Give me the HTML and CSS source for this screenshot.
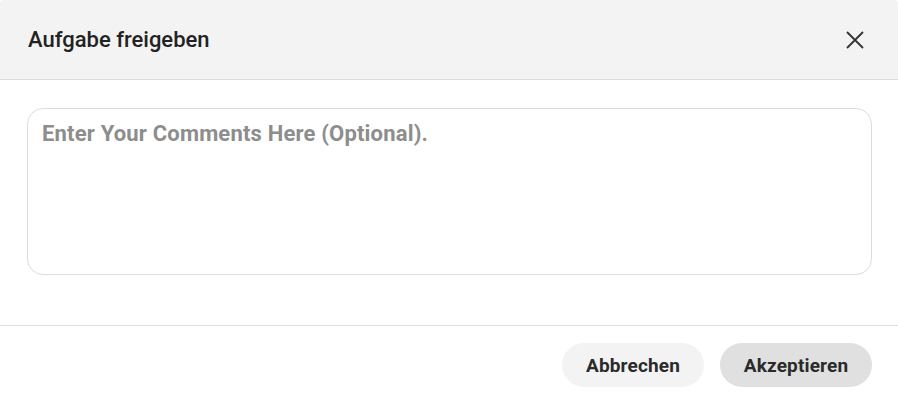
FILE: index.html
```html
<!DOCTYPE html>
<html lang="de">
<head>
<meta charset="utf-8">
<link rel="stylesheet" href="styles.css">
</head>
<body>
<div class="dialog">
  <header class="dialog-header">
    <h2 class="dialog-title">Aufgabe freigeben</h2>
    <button class="close-btn" aria-label="Schließen">
      <svg width="18" height="18" viewBox="0 0 18 18"><path d="M1 1L17 17M17 1L1 17" stroke="#333" stroke-width="1.8" fill="none"/></svg>
    </button>
  </header>
  <div class="dialog-body">
    <textarea class="comment" placeholder="Enter Your Comments Here (Optional)."></textarea>
  </div>
  <footer class="dialog-footer">
    <button class="btn btn-cancel">Abbrechen</button>
    <button class="btn btn-accept">Akzeptieren</button>
  </footer>
</div>
</body>
</html>
```
FILE: styles.css
```css
html, body {
  margin: 0;
  padding: 0;
  background: #ffffff;
  font-family: Roboto, "Liberation Sans", sans-serif;
}
.dialog {
  width: 898px;
  height: 400px;
  display: flex;
  flex-direction: column;
  background: #fff;
  border-radius: 4px 4px 0 0;
  overflow: hidden;
}
.dialog-header {
  height: 79px;
  flex: none;
  background: #f3f3f3;
  border-bottom: 1px solid #dcdcdc;
  display: flex;
  align-items: center;
  justify-content: space-between;
  padding: 0 34px 0 28px;
}
.dialog-title {
  margin: 0;
  font-size: 22px;
  font-weight: 500;
  color: #222;
  letter-spacing: 0;
}
.close-btn {
  background: none;
  border: none;
  padding: 0;
  width: 18px;
  height: 18px;
  display: flex;
  cursor: pointer;
}
.dialog-body {
  padding: 28px 26px 50px 27px;
  border-bottom: 1px solid #dcdcdc;
}
.comment {
  display: block;
  box-sizing: border-box;
  width: 100%;
  height: 167px;
  border: 1px solid #dcdcdc;
  border-radius: 16px;
  padding: 12px 14px;
  resize: none;
  outline: none;
  font-family: Roboto, "Liberation Sans", sans-serif;
  font-size: 22px;
  font-weight: 700;
  letter-spacing: 0.18px;
  color: #333;
}
.comment::placeholder {
  color: #8d8d8d;
  opacity: 1;
}
.dialog-footer {
  display: flex;
  justify-content: flex-end;
  gap: 16px;
  padding: 17px 26px 0 0;
}
.btn {
  height: 44px;
  border: none;
  border-radius: 22px;
  font-family: Roboto, "Liberation Sans", sans-serif;
  font-size: 19px;
  font-weight: 700;
  letter-spacing: 0.15px;
  color: #2a2a2a;
  padding: 0;
  cursor: pointer;
}
.btn-cancel {
  background: #f3f3f3;
  width: 142px;
}
.btn-accept {
  background: #e0e0e0;
  width: 152px;
}
```
